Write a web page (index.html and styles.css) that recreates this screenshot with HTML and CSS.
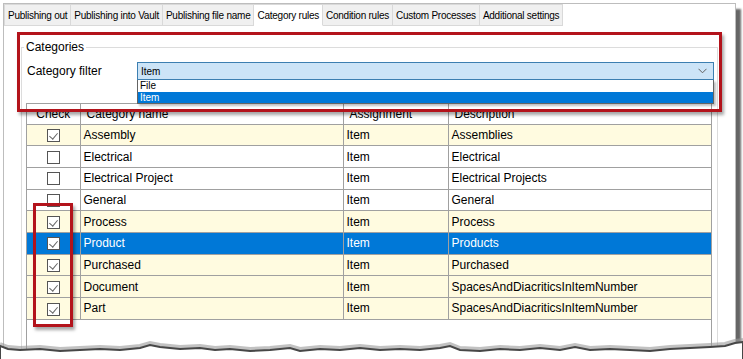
FILE: index.html
```html
<!DOCTYPE html>
<html lang="en">
<head>
    <meta charset="UTF-8">
    <meta name="viewport" content="width=device-width, initial-scale=1.0">
    <title>Category rules</title>
    <link rel="stylesheet" href="styles.css">
</head>
<body>
    <div class="shot">
        <div class="window">
            <div class="tabs">
                <div class="tab">Publishing out</div>
                <div class="tab">Publishing into Vault</div>
                <div class="tab">Publishing file name</div>
                <div class="tab active">Category rules</div>
                <div class="tab">Condition rules</div>
                <div class="tab">Custom Processes</div>
                <div class="tab">Additional settings</div>
            </div>

            <div class="page">
                <fieldset class="group">
                    <legend>Categories</legend>

                    <div class="filter">
                        <label class="filter-label">Category filter</label>
                        <div class="combo">
                            <span class="combo-value">Item</span>
                            <svg class="chevron" width="9" height="6" viewBox="0 0 9 6">
                                <polyline points="0.5,0.8 4.5,4.8 8.5,0.8" fill="none" stroke="#606060" stroke-width="1"/>
                            </svg>
                            <!-- lista desplegada del combo -->
                            <div class="combo-list">
                                <div class="combo-item">File</div>
                                <div class="combo-item selected">Item</div>
                            </div>
                        </div>
                    </div>

                    <div class="grid">
                        <table class="grid-table">
                            <colgroup>
                                <col class="col-check">
                                <col class="col-name">
                                <col class="col-assign">
                                <col class="col-desc">
                            </colgroup>
                            <thead>
                                <tr>
                                    <th class="center">Check</th>
                                    <th>Category name</th>
                                    <th>Assignment</th>
                                    <th>Description</th>
                                </tr>
                            </thead>
                            <tbody>
                                <tr class="on">
                                    <td class="center"><span class="cb checked"></span></td>
                                    <td>Assembly</td>
                                    <td>Item</td>
                                    <td>Assemblies</td>
                                </tr>
                                <tr>
                                    <td class="center"><span class="cb"></span></td>
                                    <td>Electrical</td>
                                    <td>Item</td>
                                    <td>Electrical</td>
                                </tr>
                                <tr>
                                    <td class="center"><span class="cb"></span></td>
                                    <td>Electrical Project</td>
                                    <td>Item</td>
                                    <td>Electrical Projects</td>
                                </tr>
                                <tr>
                                    <td class="center"><span class="cb"></span></td>
                                    <td>General</td>
                                    <td>Item</td>
                                    <td>General</td>
                                </tr>
                                <tr class="on">
                                    <td class="center"><span class="cb checked"></span></td>
                                    <td>Process</td>
                                    <td>Item</td>
                                    <td>Process</td>
                                </tr>
                                <tr class="selected">
                                    <td class="center"><span class="cb checked"></span></td>
                                    <td>Product</td>
                                    <td>Item</td>
                                    <td>Products</td>
                                </tr>
                                <tr class="on">
                                    <td class="center"><span class="cb checked"></span></td>
                                    <td>Purchased</td>
                                    <td>Item</td>
                                    <td>Purchased</td>
                                </tr>
                                <tr class="on">
                                    <td class="center"><span class="cb checked"></span></td>
                                    <td>Document</td>
                                    <td>Item</td>
                                    <td>SpacesAndDiacriticsInItemNumber</td>
                                </tr>
                                <tr class="on">
                                    <td class="center"><span class="cb checked"></span></td>
                                    <td>Part</td>
                                    <td>Item</td>
                                    <td>SpacesAndDiacriticsInItemNumber</td>
                                </tr>
                            </tbody>
                        </table>
                    </div>
                </fieldset>
            </div>
        </div>

        <!-- marcas rojas de la captura -->
        <div class="mark mark-filter"></div>
        <div class="mark mark-checks"></div>

        <!-- borde rasgado inferior -->
        <svg class="torn" width="743" height="30" viewBox="0 0 743 30">
            <path d="M0,16 L8,19 L20,20 L40,19 L60,21 L80,20 L100,19 L120,20 L140,18 L150,15 L160,17 L180,19 L200,18 L215,20 L230,19 L250,21 L270,20 L290,18 L300,21 L320,19 L340,20 L360,18 L380,20 L400,19 L420,20 L440,18 L450,16 L460,20 L480,21 L500,19 L520,20 L540,18 L560,20 L575,17 L590,20 L610,19 L630,20 L650,21 L670,19 L690,18 L710,17 L725,16 L735,13 L743,12"
                  fill="none" stroke="#9a9a9a" stroke-width="4" opacity="0.6" transform="translate(0,-2)"/>
            <path d="M0,16 L8,19 L20,20 L40,19 L60,21 L80,20 L100,19 L120,20 L140,18 L150,15 L160,17 L180,19 L200,18 L215,20 L230,19 L250,21 L270,20 L290,18 L300,21 L320,19 L340,20 L360,18 L380,20 L400,19 L420,20 L440,18 L450,16 L460,20 L480,21 L500,19 L520,20 L540,18 L560,20 L575,17 L590,20 L610,19 L630,20 L650,21 L670,19 L690,18 L710,17 L725,16 L735,13 L743,12 L743,30 L0,30 Z"
                  fill="#ffffff" stroke="#474747" stroke-width="2"/>
        </svg>
    </div>
</body>
</html>
```

FILE: styles.css
```css
:root {
    --grid-line: #a0a0a0;
    --row-on: #fffbe0;
    --select-blue: #0078d7;
    --mark-red: #b3131b;
}

* {
    margin: 0;
    padding: 0;
    box-sizing: border-box;
}

body {
    font-family: 'Liberation Sans', Arial, sans-serif;
    background-color: #ffffff;
    color: #000000;
}

.shot {
    position: relative;
    width: 743px;
    height: 359px;
    overflow: hidden;
}

.window {
    margin: 3px 0 0 3px;
    width: 733px;
    height: 380px;
    border: 1px solid #bdbdbd;
    background: #ffffff;
    box-shadow: 5px 6px 2px rgba(0, 0, 0, 0.6);
}

/* pestañas */
.tabs {
    display: flex;
    height: 22px;
}

.tab {
    padding: 0 3px;
    font-size: 10px;
    letter-spacing: -0.25px;
    line-height: 21px;
    background-color: #f0f0f0;
    border: 1px solid #d9d9d9;
    border-left: none;
    white-space: nowrap;
}

.tab:first-child {
    border-left: 1px solid #d9d9d9;
}

.tab.active {
    background-color: #ffffff;
    border-bottom-color: #ffffff;
}

.page {
    padding: 14px 17px 0 17px;
}

.group {
    border: 1px solid #dcdcdc;
    padding: 0 5px 0 4px;
    height: 360px;
}

.group legend {
    font-size: 12px;
    margin-left: -2px;
    padding: 0 2px;
}

/* filtro */
.filter {
    display: flex;
    align-items: center;
    margin-top: 8px;
    padding-left: 1px;
    margin-right: -2px;
}

.filter-label {
    width: 110px;
    font-size: 12px;
}

.combo {
    position: relative;
    flex: 1;
    height: 18px;
    background-color: #cce4f7;
    border: 1px solid #3c7fb1;
    display: flex;
    align-items: center;
    justify-content: space-between;
    padding: 0 6px 0 3px;
}

.combo-value {
    font-size: 10px;
}

.combo-list {
    position: absolute;
    top: 17px;
    left: -1px;
    right: -1px;
    background: #ffffff;
    border: 1px solid #646464;
    border-top: none;
    box-shadow: 2px 2px 2px rgba(0, 0, 0, 0.25);
}

.combo-item {
    font-size: 10px;
    line-height: 11.5px;
    padding-left: 2px;
}

.combo-item.selected {
    background-color: var(--select-blue);
    color: #ffffff;
}

/* tabla de categorías */
.grid {
    margin-top: 23px;
    height: 300px;
    border-left: 1px solid var(--grid-line);
    border-right: 1px solid var(--grid-line);
}

.grid-table {
    width: 100%;
    border-collapse: collapse;
    table-layout: fixed;
    font-size: 12px;
}

.col-check { width: 53px; }
.col-name { width: 263px; }
.col-assign { width: 105px; }

.grid-table th,
.grid-table td {
    border: 1px solid var(--grid-line);
    text-align: left;
    white-space: nowrap;
    overflow: hidden;
}

.grid-table tr > :first-child {
    border-left: none;
}

.grid-table tr > :last-child {
    border-right: none;
}

.grid-table th {
    font-weight: normal;
    height: 20.5px;
    padding: 0 6px;
    background: #ffffff;
}

.grid-table td {
    height: 21.7px;
    padding: 0 3px;
}

.grid-table .center {
    text-align: center;
}

.grid-table tr.on td {
    background-color: var(--row-on);
}

.grid-table tr.selected td {
    background-color: var(--select-blue);
    color: #ffffff;
}

.cb {
    display: inline-block;
    position: relative;
    width: 13px;
    height: 13px;
    border: 1px solid #555555;
    background: #ffffff;
    vertical-align: middle;
}

.cb.checked::after {
    content: '';
    position: absolute;
    left: 3px;
    top: 1px;
    width: 4px;
    height: 7px;
    border-right: 1px solid #666666;
    border-bottom: 1px solid #666666;
    transform: rotate(40deg);
}

/* recuadros rojos */
.mark {
    position: absolute;
    border: 3px solid var(--mark-red);
    box-shadow: 2px 3px 3px rgba(0, 0, 0, 0.35);
}

.mark-filter {
    left: 17px;
    top: 32px;
    width: 705px;
    height: 80px;
}

.mark-checks {
    left: 33px;
    top: 203px;
    width: 40px;
    height: 124px;
}

.torn {
    position: absolute;
    left: 0;
    top: 330px;
}
```
